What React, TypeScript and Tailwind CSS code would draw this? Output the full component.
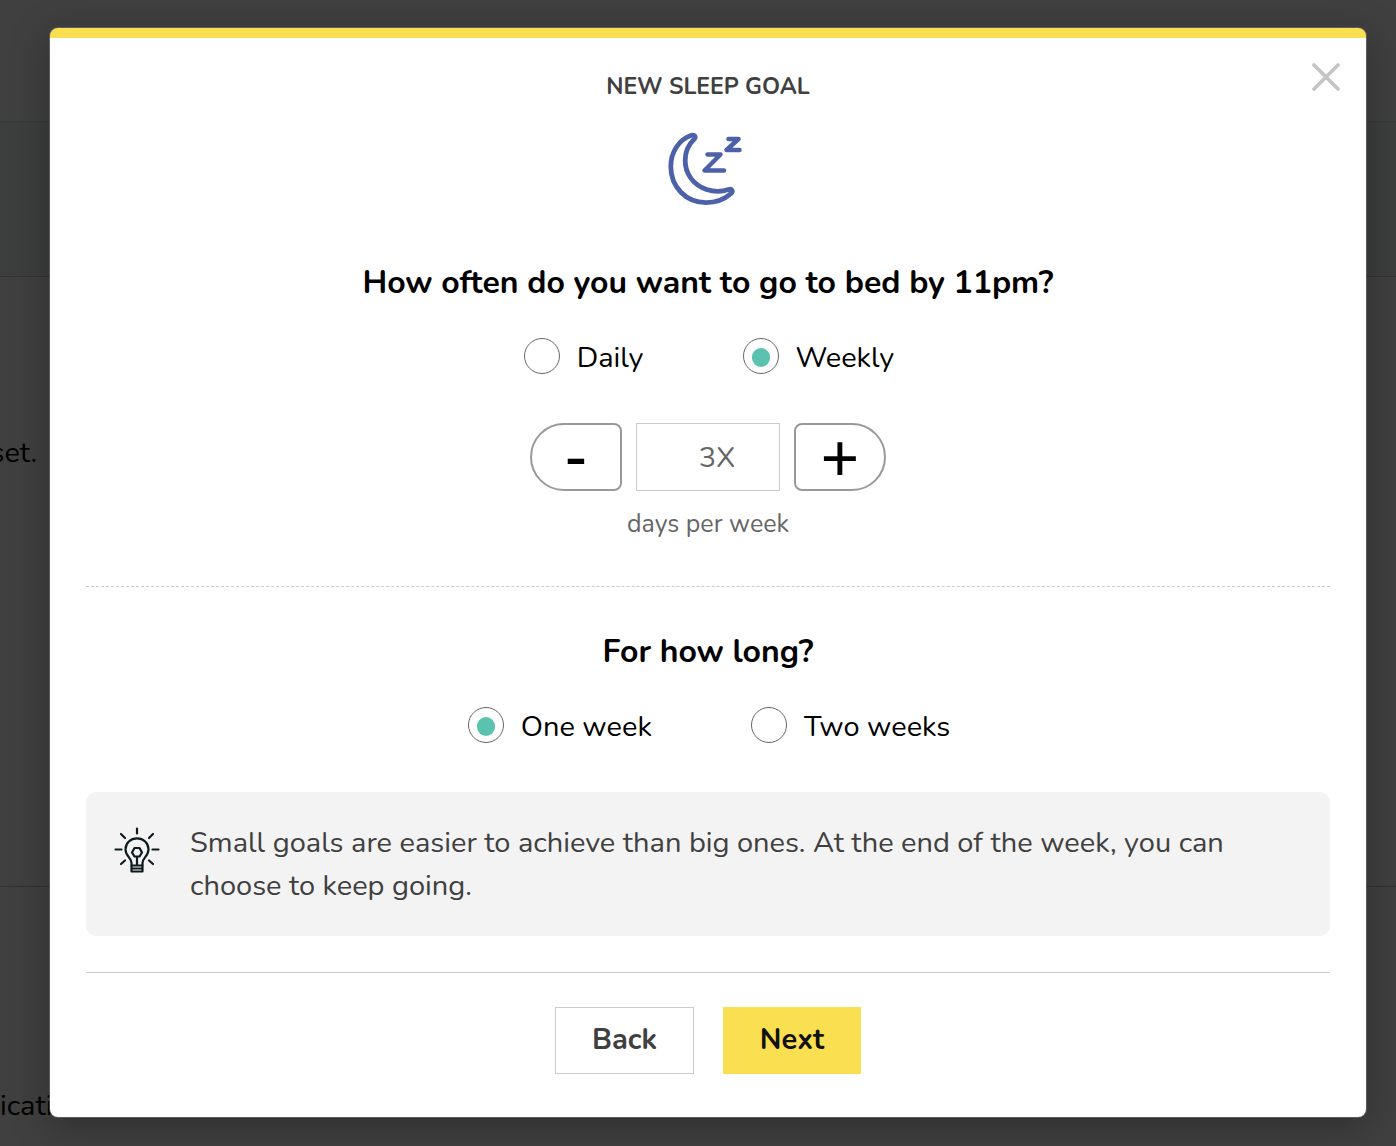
import { useState } from "react";

function RadioOption({
    name,
    label,
    checked,
    onChange,
}: {
    name: string;
    label: string;
    checked: boolean;
    onChange: () => void;
}) {
    return (
        <label className="flex items-center gap-[17px] text-[29px] leading-9 text-black">
            <input
                type="radio"
                name={name}
                checked={checked}
                onChange={onChange}
                className="grid size-9 shrink-0 appearance-none place-content-center rounded-full border border-[#666] bg-white pt-[2px] before:h-[19px] before:w-[18px] before:rounded-full checked:before:bg-[#5bc2b0]"
            />
            <span className="pt-1">{label}</span>
        </label>
    );
}

function MoonIcon() {
    return (
        <svg className="h-[76px] w-[76px]" viewBox="0 0 76 76" fill="none" stroke="#4c61a8" strokeWidth="4.8" strokeLinecap="round" strokeLinejoin="round" aria-hidden="true">
            <path d="M24.500 4.300C12 8.500 3.800 21 3.800 35.500C3.800 56 19 71.600 39 71.600C49.500 71.600 58.500 67.500 64 62.500C66.500 60 65 57.600 61.500 58.500C56 60.500 47 61 39.500 58.500C26.500 54 18.200 43 18.200 29.500C18.200 20.500 21.500 13.500 27.300 8C29.300 5.500 27.500 3.500 24.500 4.300Z" />
            <path d="M40.500 23.500H53.500L37.500 39.500H57" strokeWidth="4.5" />
            <path d="M61.500 8H71.500L59.500 19H72.500" strokeWidth="4.5" />
        </svg>
    );
}

function BulbIcon() {
    return (
        <svg className="h-[46px] w-[46px] shrink-0" viewBox="0 0 46 46" fill="none" stroke="#0d1b1e" strokeWidth="2.2" strokeLinecap="round" strokeLinejoin="round" aria-hidden="true">
            <path d="M23 1.500V6.500M7 7L11 11M39 7L35 11M1.500 22.500H7.500M38.500 22.500H44.500M7 37L11 33.500M39 37L35 33.500" />
            <path d="M17.500 38V36C17.500 31 11.500 29 11.500 22.500C11.500 16 16.500 11.300 23 11.300S34.500 16 34.500 22.500C34.500 29 28.500 31 28.500 36V38" />
            <path d="M20.500 21H25.500L28 25.500L25.500 29.500H20.500L18 25.500ZM23 29.500V38" />
            <path d="M17.500 38.500H28.500V44.500H17.500ZM17.500 41.500H28.500" />
        </svg>
    );
}

function PageBehind() {
    return (
        <div className="flex min-h-screen flex-col overflow-hidden bg-white text-[29px] text-black" aria-hidden="true">
            <div className="h-[122px] border-b border-[#ddd]" />
            <div className="h-[155px] border-b border-[#ccc] bg-[#f2f8f6]" />
            <div className="h-[610px] border-b border-[#ccc] pt-[156px]">
                <div className="flex w-[37px] justify-end whitespace-nowrap leading-10">set.</div>
            </div>
            <div className="grow pt-[199px]">
                <div className="whitespace-nowrap leading-10">ication</div>
            </div>
        </div>
    );
}

function App() {
    const [frequency, setFrequency] = useState("weekly");
    const [days, setDays] = useState(3);
    const [duration, setDuration] = useState("one");

    return (
        <div className="grid font-['Nunito','Noto_Sans',sans-serif]">
            <div className="col-start-1 row-start-1">
                <PageBehind />
            </div>
            <div className="relative col-start-1 row-start-1 bg-black/75 pt-7 pr-[30px] pb-7 pl-[50px]">
                <div role="dialog" aria-labelledby="goal-title" className="relative rounded-lg border-t-10 border-[#fadf50] bg-white px-9 pt-8 pb-[43px] shadow-[0_0_0_1px_rgba(130,130,130,0.5),0_8px_40px_rgba(0,0,0,0.3)]">
                    <button type="button" aria-label="Close" className="absolute top-[25px] right-[26px]">
                        <svg className="h-7 w-7" viewBox="0 0 28 28" stroke="#c4c4c4" strokeWidth="3.6" strokeLinecap="round" aria-hidden="true">
                            <path d="M2 2L26 26M26 2L2 26" />
                        </svg>
                    </button>
                    <h1 id="goal-title" className="text-center text-[23px] leading-[34px] font-bold text-[#404040]">
                        NEW SLEEP GOAL
                    </h1>
                    <div className="flex justify-center pt-[27px] pr-1.5">
                        <MoonIcon />
                    </div>

                    <h2 className="pt-[52px] text-center text-[32px] leading-12 font-bold text-black">
                        How often do you want to go to bed by 11pm?
                    </h2>
                    <div className="flex justify-center gap-[99px] pt-[29px] pl-0.5">
                        <RadioOption name="frequency" label="Daily" checked={frequency === "daily"} onChange={() => setFrequency("daily")} />
                        <RadioOption name="frequency" label="Weekly" checked={frequency === "weekly"} onChange={() => setFrequency("weekly")} />
                    </div>
                    <div className="flex justify-center gap-[14px] pt-[47px]">
                        <button
                            type="button"
                            aria-label="Fewer days"
                            className="h-[68px] w-[92px] rounded-l-[34px] rounded-r-lg border-2 border-[#999] pb-1.5 font-['Noto_Sans',sans-serif] text-[68px] leading-[56px]"
                            onClick={() => setDays(Math.max(1, days - 1))}
                        >
                            -
                        </button>
                        <input
                            aria-label="Days per week"
                            readOnly
                            value={`${days}X`}
                            className="h-[68px] w-36 border border-[#ccc] pl-[18px] text-center text-[29px] text-[#666]"
                        />
                        <button
                            type="button"
                            aria-label="More days"
                            className="h-[68px] w-[92px] rounded-l-lg rounded-r-[34px] border-2 border-[#999] font-['Noto_Sans',sans-serif] text-[68px] leading-[56px]"
                            onClick={() => setDays(Math.min(7, days + 1))}
                        >
                            +
                        </button>
                    </div>
                    <p className="pt-[17px] text-center text-[25px] leading-8 text-[#666]">days per week</p>

                    <hr className="mt-[46px] border-dashed border-[#ccc]" />

                    <h2 className="pt-[41px] text-center text-[32px] leading-12 font-bold text-black">For how long?</h2>
                    <div className="flex justify-center gap-[99px] pt-[29px] pl-0.5">
                        <RadioOption name="duration" label="One week" checked={duration === "one"} onChange={() => setDuration("one")} />
                        <RadioOption name="duration" label="Two weeks" checked={duration === "two"} onChange={() => setDuration("two")} />
                    </div>

                    <div className="mt-[47px] flex gap-[30px] rounded-[10px] bg-[#f3f3f3] py-[29px] pr-16 pl-7">
                        <div className="pt-1.5">
                            <BulbIcon />
                        </div>
                        <p className="text-[29px] leading-[43px] text-[#404040]">
                            Small goals are easier to achieve than big ones. At the end of the week, you can choose to keep going.
                        </p>
                    </div>

                    <hr className="mt-9 border-[#ccc]" />

                    <div className="flex justify-center gap-[29px] pt-[34px]">
                        <button type="button" className="h-[67px] w-[139px] border border-[#ccc] bg-white pb-0.5 text-[29px] font-bold text-[#404040]">
                            Back
                        </button>
                        <button type="button" className="h-[67px] w-[138px] bg-[#fadf50] pb-0.5 text-[29px] font-bold text-[#111]">
                            Next
                        </button>
                    </div>
                </div>
            </div>
        </div>
    );
}

export default App;
